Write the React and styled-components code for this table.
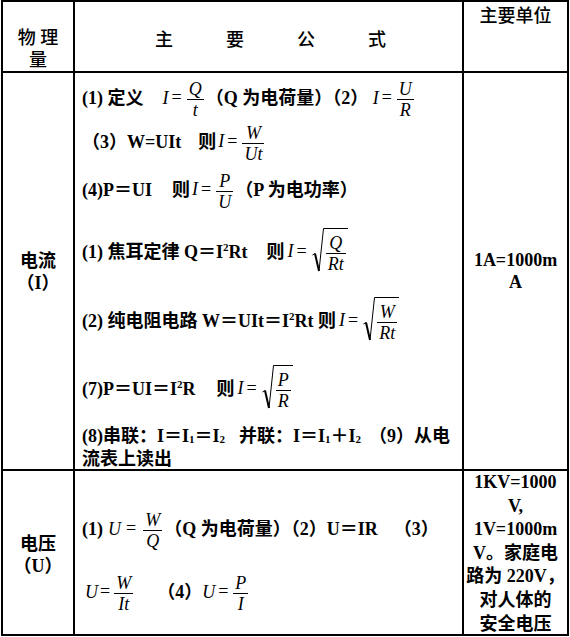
import React from 'react'
import styled, { createGlobalStyle } from 'styled-components'

const GlobalStyle = createGlobalStyle`
  html, body {
    margin: 0;
    padding: 0;
    background: #fff;
  }
  body {
    font-family: "Liberation Serif", "Noto Sans CJK SC", serif;
    color: #000;
  }
`

const Table = styled.div`
  display: grid;
  grid-template-columns: 72px 389px 105px;
  grid-template-rows: 71px 398px 165px;
  width: max-content;
  margin-left: 1px;
  border-left: 2px solid #000;
  border-top: 2px solid #000;
`

const Cell = styled.div`
  box-sizing: border-box;
  border-right: 2px solid #000;
  border-bottom: 2px solid #000;
  min-width: 0;
`

const HeadName = styled(Cell)`
  padding-top: 25px;
  text-align: center;
  font-size: 18px;
  line-height: 22px;
  font-weight: 500;
`

const HeadFormula = styled(Cell)`
  display: flex;
  align-items: center;
  justify-content: center;
  gap: 53px;
  padding: 3px 0 0 4px;
  font-size: 18px;
  font-weight: 500;
`

const HeadUnit = styled(Cell)`
  padding-top: 3px;
  text-align: center;
  font-size: 18px;
  line-height: 22px;
  font-weight: 500;
`

const NameCell = styled(Cell)`
  display: flex;
  flex-direction: column;
  align-items: center;
  justify-content: center;
  padding-top: ${(p) => p.$pt || 0}px;
  font-size: 18px;
  line-height: 22px;
  font-weight: 700;
`

const FormulaCell = styled(Cell)`
  display: flex;
  flex-direction: column;
  padding: ${(p) => p.$pt || 0}px 0 0 7px;
  font-size: 18px;
  font-weight: 700;
`

const UnitCell = styled(Cell)`
  display: flex;
  flex-direction: column;
  justify-content: ${(p) => (p.$top ? 'flex-start' : 'center')};
  text-align: center;
  font-size: 18px;
  line-height: ${(p) => p.$lh}px;
  font-weight: 700;
  white-space: nowrap;
`

const Line = styled.div`
  display: flex;
  align-items: center;
  height: ${(p) => p.$h}px;
  margin-top: ${(p) => p.$mt || 0}px;
  white-space: nowrap;
`

const Inline = styled.span`
  display: block;
  white-space: pre;
  line-height: 22px;
`

const Gap = styled.span`
  display: inline-block;
  width: ${(p) => p.$w}px;
`

const Var = styled.span`
  font-style: italic;
  font-weight: 400;
  margin-left: ${(p) => p.$ml || 0}px;
`

const Eq = styled.span`
  font-weight: 400;
  margin: 0 ${(p) => (p.$m === undefined ? 3 : p.$m)}px;
`

const Sup = styled.span`
  font-size: 11px;
  line-height: 0;
  vertical-align: 7px;
`

const Sub = styled.span`
  font-size: 11px;
  line-height: 0;
  vertical-align: -1px;
`

const FracBox = styled.span`
  display: inline-flex;
  flex-direction: column;
  align-items: center;
  vertical-align: middle;
  margin: 0 2px;
  font-style: italic;
  font-weight: 400;
`

const FracPart = styled.span`
  line-height: 20px;
  padding: 0 2px;
`

const FracBar = styled.span`
  align-self: stretch;
  height: 1px;
  background: #000;
`

const Frac = ({ n, d }) => (
  <FracBox>
    <FracPart>{n}</FracPart>
    <FracBar />
    <FracPart>{d}</FracPart>
  </FracBox>
)

const SqrtBox = styled.span`
  display: inline-flex;
  align-items: flex-start;
  vertical-align: middle;
  padding-bottom: 5px;
  margin-left: 2px;
`

const RadicalSvg = styled.svg`
  display: block;
  flex: none;
`

const Radicand = styled.span`
  display: inline-flex;
  border-top: 1px solid #000;
  padding-top: 4px;
`

const Sqrt = ({ children }) => (
  <SqrtBox>
    <RadicalSvg width="12" height="46" viewBox="0 0 12 46">
      <path d="M0.5 27 L3 25.5" stroke="#000" strokeWidth="1" fill="none" />
      <path d="M3 25.5 L7 43" stroke="#000" strokeWidth="2" fill="none" />
      <path d="M7 43 L11.5 0.5 L12 0.5" stroke="#000" strokeWidth="1" fill="none" />
    </RadicalSvg>
    <Radicand>{children}</Radicand>
  </SqrtBox>
)

const IEq = ({ ml = 0 }) => (
  <>
    <Var $ml={ml}>I</Var>
    <Eq>=</Eq>
  </>
)

const UEq = ({ m }) => (
  <>
    <Var>U</Var>
    <Eq $m={m}>=</Eq>
  </>
)

const App = () => (
  <>
    <GlobalStyle />
    <Table>
      <HeadName>
        物 理
        <br />量
      </HeadName>
      <HeadFormula>
        <span>主</span>
        <span>要</span>
        <span>公</span>
        <span>式</span>
      </HeadFormula>
      <HeadUnit>主要单位</HeadUnit>

      <NameCell $pt={2}>
        <span>电流</span>
        <span>（I）</span>
      </NameCell>
      <FormulaCell $pt={2}>
        <Line $h={48}>
          <Inline>
            {'(1) 定义'}
            <Gap $w={19} />
            <IEq />
            <Frac n="Q" d="t" />
            {'（Q 为电荷量）（2） '}
            <IEq />
            <Frac n="U" d="R" />
          </Inline>
        </Line>
        <Line $h={40}>
          <Inline>
            {'（3）W=UIt'}
            <Gap $w={17} />
            {'则'}
            <IEq ml={2} />
            <Frac n="W" d="Ut" />
          </Inline>
        </Line>
        <Line $h={56}>
          <Inline>
            {'(4)P＝UI'}
            <Gap $w={20} />
            {'则'}
            <IEq ml={2} />
            <Frac n="P" d="U" />
            {'（P 为电功率）'}
          </Inline>
        </Line>
        <Line $h={68}>
          <Inline>
            {'(1) 焦耳定律 Q＝I'}
            <Sup>2</Sup>
            {'Rt'}
            <Gap $w={19} />
            {'则'}
            <IEq ml={3} />
            <Sqrt>
              <Frac n="Q" d="Rt" />
            </Sqrt>
          </Inline>
        </Line>
        <Line $h={70}>
          <Inline>
            {'(2) 纯电阻电路 W＝UIt＝I'}
            <Sup>2</Sup>
            {'Rt 则'}
            <IEq ml={3} />
            <Sqrt>
              <Frac n="W" d="Rt" />
            </Sqrt>
          </Inline>
        </Line>
        <Line $h={66}>
          <Inline>
            {'(7)P＝UI＝I'}
            <Sup>2</Sup>
            {'R'}
            <Gap $w={21} />
            {'则'}
            <IEq ml={3} />
            <Sqrt>
              <Frac n="P" d="R" />
            </Sqrt>
          </Inline>
        </Line>
        <Line $h={26}>
          <Inline>
            {'(8)串联：I＝I'}
            <Sub>1</Sub>
            {'＝I'}
            <Sub>2</Sub>
            <Gap $w={14} />
            {'并联：I＝I'}
            <Sub>1</Sub>
            {'＋I'}
            <Sub>2</Sub>
            <Gap $w={8} />
            {'（9）从电'}
          </Inline>
        </Line>
        <Line $h={20}>
          <Inline>流表上读出</Inline>
        </Line>
      </FormulaCell>
      <UnitCell $lh={22}>
        <span>1A=1000m</span>
        <span>A</span>
      </UnitCell>

      <NameCell $pt={4}>
        <span>电压</span>
        <span>（U）</span>
      </NameCell>
      <FormulaCell>
        <Line $h={50} $mt={34}>
          <Inline>
            {'(1)'}
            <Gap $w={5} />
            <UEq m={5} />
            <Frac n="W" d="Q" />
            {'（Q 为电荷量）（2）U＝IR'}
            <Gap $w={16} />
            {'（3）'}
          </Inline>
        </Line>
        <Line $h={50} $mt={13}>
          <Inline>
            <Gap $w={3} />
            <UEq m={2} />
            <Frac n="W" d="It" />
            <Gap $w={22} />
            {'（4）'}
            <UEq m={3} />
            <Frac n="P" d="I" />
          </Inline>
        </Line>
      </FormulaCell>
      <UnitCell $lh={23.6} $top>
        <span>1KV=1000</span>
        <span>V,</span>
        <span>1V=1000m</span>
        <span>V。家庭电</span>
        <span>路为 220V，</span>
        <span>对人体的</span>
        <span>安全电压</span>
      </UnitCell>
    </Table>
  </>
)

export default App
